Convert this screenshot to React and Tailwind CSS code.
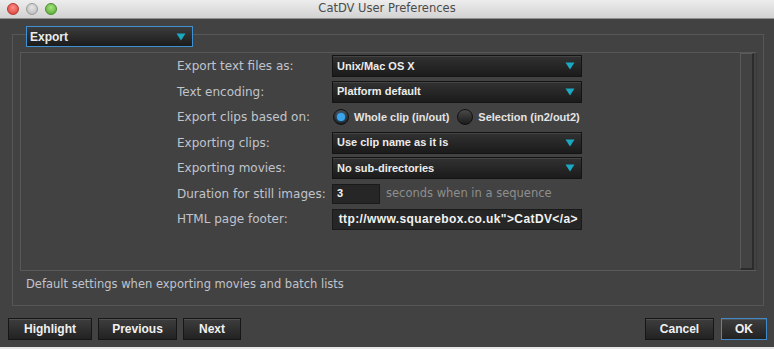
import React from 'react';

const labelFont = { fontFamily: '"DejaVu Sans", sans-serif' };
const boldFont = { fontFamily: '"Liberation Sans", Arial, sans-serif' };

function Caret() {
  return (
    <svg width="10" height="8" viewBox="0 0 10 8" className="shrink-0">
      <path d="M0.5 0.5 H9.5 L5 7.5 Z" fill="#1aa8c2" />
    </svg>
  );
}

function Select({ value }) {
  return (
    <div
      className="flex h-[22px] w-[250px] items-center justify-between border border-[#141414] bg-gradient-to-b from-[#323232] to-[#1b1b1b] pl-[4px] pr-[6px] text-[11px] font-bold text-[#ececec] shadow-[inset_0_1px_0_#444]"
      style={boldFont}
    >
      <span>{value}</span>
      <Caret />
    </div>
  );
}

function Radio({ checked, label }) {
  return (
    <div className="flex items-center gap-[5px]">
      <div className="flex h-[16px] w-[16px] items-center justify-center rounded-full border border-[#111] bg-gradient-to-b from-[#4a4a4a] to-[#1c1c1c]">
        {checked && <div className="h-[8px] w-[8px] rounded-full bg-[#3aa3ec] shadow-[0_0_3px_#2d8fd8]" />}
      </div>
      <span className="text-[11px] font-bold text-[#e4e4e4]" style={boldFont}>
        {label}
      </span>
    </div>
  );
}

function Row({ label, children }) {
  return (
    <div className="flex h-[22px] items-center">
      <div className="w-[155px] text-[12px] text-[#c0c4cd]" style={labelFont}>
        {label}
      </div>
      {children}
    </div>
  );
}

function Button({ children, w, focus }) {
  return (
    <div
      className={`flex h-[22px] items-center justify-center border bg-gradient-to-b from-[#3e3e3e] to-[#222] text-[12px] font-bold text-[#f0f0f0] shadow-[inset_0_1px_0_#505050] ${focus ? 'border-[#3f8acb]' : 'border-[#161616]'}`}
      style={{ ...boldFont, width: w }}
    >
      {children}
    </div>
  );
}

function Light({ from, to, border }) {
  return (
    <div
      className="h-[12px] w-[12px] rounded-full border"
      style={{ background: `radial-gradient(circle at 50% 35%, ${from}, ${to})`, borderColor: border }}
    />
  );
}

export default function App() {
  return (
    <div className="flex h-[349px] w-[774px] flex-col overflow-hidden bg-[#424242]">
      {/* title bar */}
      <div className="relative flex h-[19px] shrink-0 items-center border-b border-[#8f8f8f] bg-gradient-to-b from-[#ededed] to-[#d2d2d2]">
        <div className="flex items-center gap-[7px] pl-[7px]">
          <Light from="#ff8f8a" to="#d8372f" border="#b13a34" />
          <Light from="#e6e6e6" to="#b4b4b4" border="#9a9a9a" />
          <Light from="#a6e37e" to="#4fa72d" border="#4a8c2e" />
        </div>
        <div className="absolute inset-0 flex items-center justify-center text-[11.5px] text-[#4b4b4b]" style={labelFont}>
          CatDV User Preferences
        </div>
      </div>

      {/* body */}
      <div className="flex flex-1 flex-col pt-[7px]">
        <div
          className="relative z-10 ml-[26px] flex h-[21px] w-[167px] items-center justify-between border border-[#3f8fd3] bg-gradient-to-b from-[#3c3c3c] to-[#1c1c1c] pl-[3px] pr-[6px] text-[12px] font-bold text-[#ececec]"
          style={boldFont}
        >
          <span>Export</span>
          <Caret />
        </div>

        <div className="-mt-[13px] ml-[12px] flex h-[272px] w-[752px] flex-col border border-[#575757] pl-[7px] pr-[6px] pt-[17px]">
          <div className="flex h-[219px] border border-[#585858] border-r-[#3a3a3a] border-b-[#5a5a5a]">
            <div className="flex flex-1 flex-col gap-[3.5px] pl-[156px] pt-[2px]">
              <Row label="Export text files as:">
                <Select value="Unix/Mac OS X" />
              </Row>
              <Row label="Text encoding:">
                <Select value="Platform default" />
              </Row>
              <Row label="Export clips based on:">
                <div className="flex items-center gap-[8px] pl-[1px]">
                  <Radio checked label="Whole clip (in/out)" />
                  <Radio label="Selection (in2/out2)" />
                </div>
              </Row>
              <Row label="Exporting clips:">
                <Select value="Use clip name as it is" />
              </Row>
              <Row label="Exporting movies:">
                <Select value="No sub-directories" />
              </Row>
              <Row label="Duration for still images:">
                <div className="flex items-center">
                  <div
                    className="flex h-[20px] w-[48px] items-center border border-[#1a1a1a] bg-[#262626] pl-[4px] text-[11px] font-bold text-[#f2f2f2]"
                    style={boldFont}
                  >
                    3
                  </div>
                  <span className="pl-[6px] text-[11.5px] text-[#8e8e8e]" style={labelFont}>
                    seconds when in a sequence
                  </span>
                </div>
              </Row>
              <Row label="HTML page footer:">
                <div
                  className="flex h-[21px] w-[250px] items-center justify-end whitespace-nowrap border border-[#1a1a1a] bg-[#262626] pr-[3px] text-[12px] font-bold tracking-[0.4px] text-[#f2f2f2]"
                  style={boldFont}
                >
                  {'ttp://www.squarebox.co.uk">CatDV</a>'}
                </div>
              </Row>
            </div>
            {/* scrollbar track */}
            <div className="mr-[2px] w-[14px] border-l border-t border-l-[#5a5a5a] border-t-[#5a5a5a] border-r-2 border-r-[#2c2c2c] border-b-2 border-b-[#2c2c2c]" />
          </div>
          <div className="pl-[6px] pt-[5px] text-[11.5px] leading-[16px] text-[#c0c4cd]" style={labelFont}>
            Default settings when exporting movies and batch lists
          </div>
        </div>

        <div className="mt-[12px] flex items-center pl-[8px] pr-[7px]">
          <div className="flex gap-[6px]">
            <Button w={84}>Highlight</Button>
            <Button w={79}>Previous</Button>
            <Button w={58}>Next</Button>
          </div>
          <div className="ml-auto flex gap-[7px]">
            <Button w={69}>Cancel</Button>
            <Button w={46} focus>
              OK
            </Button>
          </div>
        </div>
      </div>
      <div className="h-[2px] shrink-0 bg-[#e6e6e6]" />
    </div>
  );
}
